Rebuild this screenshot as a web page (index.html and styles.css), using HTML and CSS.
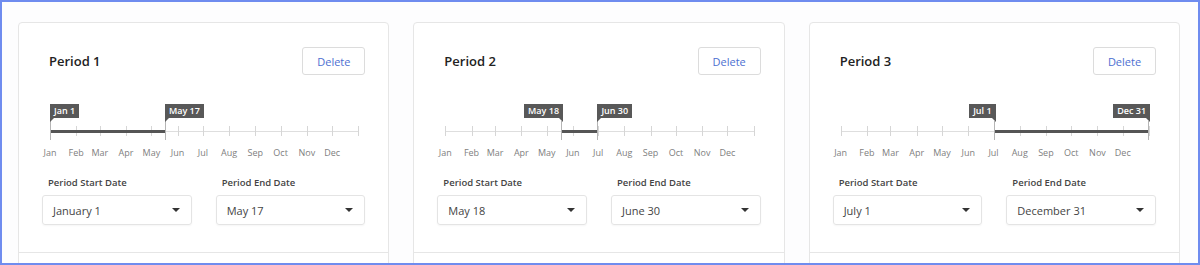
FILE: index.html
```html
<!DOCTYPE html>
<html lang="en">
<head>
    <meta charset="UTF-8">
    <meta name="viewport" content="width=device-width, initial-scale=1.0">
    <title>Periods</title>
    <link rel="stylesheet" href="styles.css">
</head>
<body>

    <div class="periods" id="periods"></div>

    <script>
        const MONTHS = ['Jan', 'Feb', 'Mar', 'Apr', 'May', 'Jun', 'Jul', 'Aug', 'Sep', 'Oct', 'Nov', 'Dec'];
        const FULL = ['January', 'February', 'March', 'April', 'May', 'June', 'July', 'August', 'September', 'October', 'November', 'December'];
        const DAYS = [31, 28, 31, 30, 31, 30, 31, 31, 30, 31, 30, 31];

        const periods = [
            { start: [0, 1], end: [4, 17] },
            { start: [4, 18], end: [5, 30] },
            { start: [6, 1], end: [11, 31] }
        ];

        function dayIndex(month, day) {
            let n = 0;
            for (let i = 0; i < month; i++) {
                n += DAYS[i];
            }
            return n + day - 1;
        }

        function pct(n) {
            return (n / 365 * 100) + '%';
        }

        function makeFlag(month, day, side) {
            const pos = dayIndex(month, day);
            const handle = document.createElement('div');
            handle.className = 'handle';
            handle.style.left = pct(pos);

            const flag = document.createElement('div');
            flag.className = 'flag flag-' + side;
            flag.innerText = MONTHS[month] + ' ' + day;
            handle.appendChild(flag);
            return handle;
        }

        function makeSelect(month, day) {
            const box = document.createElement('div');
            box.className = 'select';
            const value = document.createElement('span');
            value.innerText = FULL[month] + ' ' + day;
            box.appendChild(value);
            const caret = document.createElement('span');
            caret.className = 'caret';
            box.appendChild(caret);
            return box;
        }

        function makeCard(period, index) {
            const card = document.createElement('div');
            card.className = 'card';

            const body = document.createElement('div');
            body.className = 'card-body';

            const header = document.createElement('div');
            header.className = 'card-header';
            const title = document.createElement('h2');
            title.innerText = 'Period ' + (index + 1);
            header.appendChild(title);
            const del = document.createElement('button');
            del.className = 'delete-button';
            del.innerText = 'Delete';
            header.appendChild(del);
            body.appendChild(header);

            const timeline = document.createElement('div');
            timeline.className = 'timeline';
            const track = document.createElement('div');
            track.className = 'track';

            let n = 0;
            for (let i = 0; i <= 12; i++) {
                const tick = document.createElement('div');
                tick.className = 'tick';
                tick.style.left = pct(n);
                track.appendChild(tick);
                if (i < 12) {
                    const label = document.createElement('div');
                    label.className = 'month';
                    label.style.left = pct(n);
                    label.innerText = MONTHS[i];
                    timeline.appendChild(label);
                    n += DAYS[i];
                }
            }

            const a = dayIndex(period.start[0], period.start[1]);
            const b = dayIndex(period.end[0], period.end[1]);
            const range = document.createElement('div');
            range.className = 'range';
            range.style.left = pct(a);
            range.style.width = pct(b - a);
            track.appendChild(range);
            timeline.appendChild(track);

            timeline.appendChild(makeFlag(period.start[0], period.start[1], a === 0 ? 'right' : 'left'));
            timeline.appendChild(makeFlag(period.end[0], period.end[1], b >= 334 ? 'left' : 'right'));
            body.appendChild(timeline);

            const fields = document.createElement('div');
            fields.className = 'fields';
            const names = ['Period Start Date', 'Period End Date'];
            const dates = [period.start, period.end];
            for (let i = 0; i < 2; i++) {
                const field = document.createElement('div');
                field.className = 'field';
                const label = document.createElement('label');
                label.innerText = names[i];
                field.appendChild(label);
                field.appendChild(makeSelect(dates[i][0], dates[i][1]));
                fields.appendChild(field);
            }
            body.appendChild(fields);

            card.appendChild(body);
            const footer = document.createElement('div');
            footer.className = 'card-footer';
            card.appendChild(footer);
            return card;
        }

        const container = document.getElementById('periods');
        periods.forEach((p, i) => {
            container.appendChild(makeCard(p, i));
        });
    </script>
</body>
</html>
```

FILE: styles.css
```css
* {
    box-sizing: border-box;
}
html, body {
    height: 100%;
}
body {
    font-family: "Open Sans", Arial, sans-serif;
    margin: 0;
    height: 265px;
    overflow: hidden;
    border: 2px solid #6f8cef;
    background-color: #fdfdfe;
    color: #333;
}
.periods {
    display: grid;
    grid-template-columns: repeat(3, 1fr);
    gap: 24px;
    padding: 20px 18px 0 16px;
}
.card {
    background-color: white;
    border: 1px solid #e6e6e6;
    border-radius: 4px;
}
.card-body {
    padding: 24px 23px 27px;
    border-bottom: 1px solid #e6e6e6;
}
.card-footer {
    height: 60px;
}
.card-header {
    display: flex;
    justify-content: space-between;
    align-items: center;
    padding-left: 7px;
}
.card-header h2 {
    margin: 0 0 1px;
    font-size: 13px;
    font-weight: 600;
    color: #222;
}
.delete-button {
    height: 28px;
    width: 63px;
    background-color: white;
    border: 1px solid #dcdcdc;
    border-radius: 3px;
    color: #4d6fd1;
    font-family: "Open Sans", Arial, sans-serif;
    font-size: 11px;
    cursor: pointer;
}
.timeline {
    position: relative;
    height: 60px;
    margin: 29px 7px 0 8px;
}
.track {
    position: absolute;
    left: 0;
    right: 0;
    top: 27px;
    height: 1px;
    background-color: #dedede;
}
.tick {
    position: absolute;
    top: -5px;
    width: 1px;
    height: 10px;
    background-color: #d6d6d6;
}
.range {
    position: absolute;
    top: -1px;
    height: 3px;
    background-color: #555;
}
.month {
    position: absolute;
    top: 42px;
    transform: translateX(-50%);
    font-size: 9px;
    color: #808080;
    white-space: nowrap;
}
.handle {
    position: absolute;
    top: 17px;
    width: 1px;
    height: 19px;
    background-color: #b5b5b5;
}
.flag {
    position: absolute;
    bottom: 100%;
    margin-bottom: 3px;
    height: 14px;
    line-height: 14px;
    padding: 0 4px;
    background-color: #585858;
    color: white;
    font-size: 9px;
    font-weight: 600;
    white-space: nowrap;
}
.flag::after {
    content: "";
    position: absolute;
    top: 100%;
    border-top: 4px solid #585858;
}
.flag-right {
    left: 0;
}
.flag-right::after {
    left: 0;
    border-right: 4px solid transparent;
}
.flag-left {
    right: -1px;
}
.flag-left::after {
    right: 0;
    border-left: 4px solid transparent;
}
.fields {
    display: grid;
    grid-template-columns: 1fr 1fr;
    gap: 24px;
    margin-top: 12px;
}
.field label {
    display: block;
    padding-left: 6px;
    font-size: 9.5px;
    font-weight: 600;
    color: #444;
    line-height: 14px;
    margin-bottom: 5px;
}
.select {
    display: flex;
    justify-content: space-between;
    align-items: center;
    height: 30px;
    padding: 0 11px 0 10px;
    border: 1px solid #e4e4e4;
    border-radius: 3px;
    box-shadow: 0 1px 2px rgba(0, 0, 0, 0.04);
    font-size: 11px;
    color: #444;
}
.caret {
    width: 0;
    height: 0;
    border-left: 4px solid transparent;
    border-right: 4px solid transparent;
    border-top: 4px solid #333;
}
```
